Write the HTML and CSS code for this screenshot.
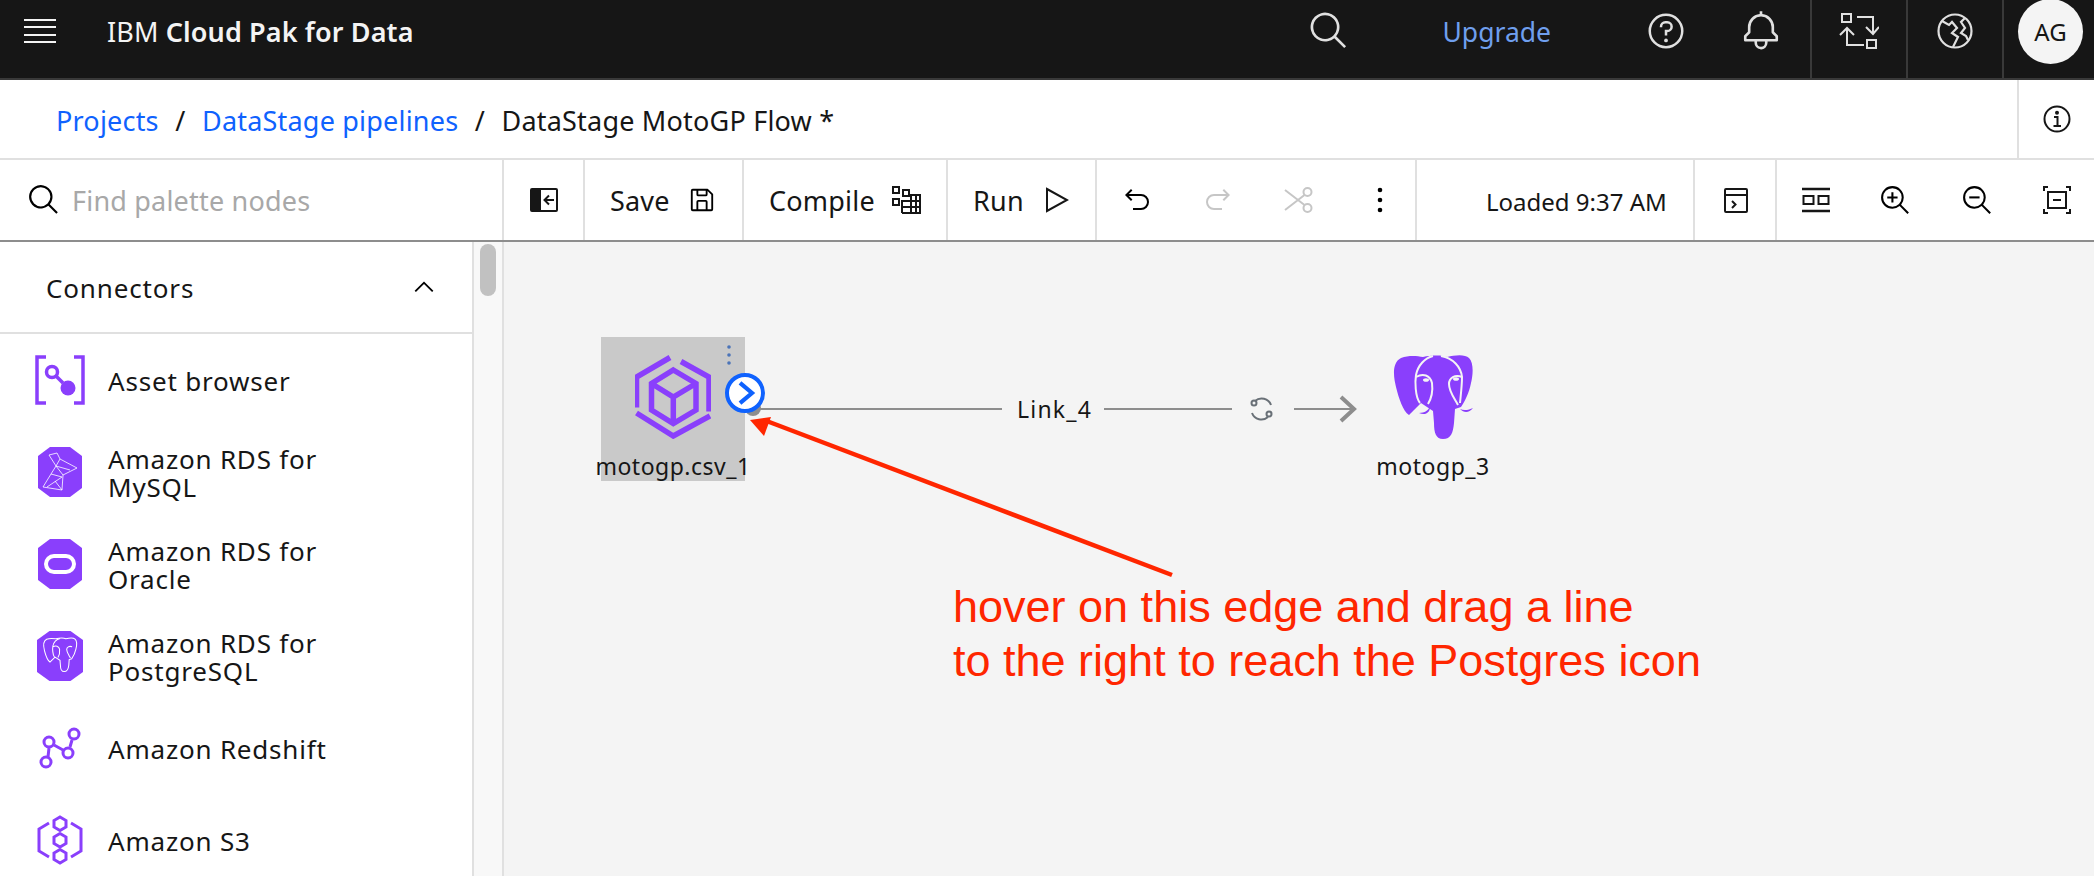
FILE: index.html
```html
<!DOCTYPE html>
<html>
<head>
  <title>DataStage MotoGP Flow - IBM Cloud Pak for Data</title>
  <link rel="stylesheet" href="styles.css">
</head>
<body>

<!-- shared shapes -->
<svg class="sprite" width="0" height="0">
  <symbol id="i-search" viewBox="0 0 32 32"><path d="M29 27.5859l-7.5521-7.5521a11.0177 11.0177 0 1 0-1.4141 1.4141L27.5859 29ZM4 13a9 9 0 1 1 9 9A9.01 9.01 0 0 1 4 13Z"/></symbol>
  <symbol id="i-lens" viewBox="0 0 32 32"><path d="M21.4479,20A10.856,10.856,0,0,0,24,13,11,11,0,1,0,13,24a10.856,10.856,0,0,0,7-2.5521L27.5859,29,29,27.5859ZM13,22a9,9,0,1,1,9-9A9.01,9.01,0,0,1,13,22Z"/></symbol>
  <symbol id="i-octagon" viewBox="0 0 44 50"><path d="M12 0H32L44 9V41L32 50H12L0 41V9Z" fill="#8a3ffc"/></symbol>
  <symbol id="i-elephant-lines" viewBox="0 0 80 84" fill="none">
    <path d="M27 48C22 42 22 26 23 20C25 10 32 3 40 1"/>
    <path d="M23 22C30 18 37 20 39 28C40 36 38 44 35 49"/>
    <path d="M48 1C60 3 68 12 69 22C69 30 68 38 67 48"/>
    <path d="M69 22C62 19 56 23 56 29C56 37 62 44 65 50"/>
  </symbol>
</svg>

<header class="topbar">
  <svg class="hamburger" width="32" height="24" viewBox="0 0 32 24"><path d="M0 1H32M0 8H32M0 16H32M0 23H32" stroke="#f4f4f4" stroke-width="2"/></svg>
  <div class="brand">IBM <strong>Cloud Pak for Data</strong></div>
  <div class="topbar-right">
    <svg class="top-icon search-top" width="42" height="42"><use href="#i-search"/></svg>
    <a class="upgrade">Upgrade</a>
    <svg class="top-icon help-top" width="40" height="40" viewBox="0 0 32 32">
      <path d="M16,2A14,14,0,1,0,30,16,14,14,0,0,0,16,2Zm0,26A12,12,0,1,1,28,16,12,12,0,0,1,16,28Z"/>
      <circle cx="16" cy="23.5" r="1.5"/>
      <path d="M17,8H15.5A4.49,4.49,0,0,0,11,12.5V13h2v-.5A2.5,2.5,0,0,1,15.5,10H17a2.5,2.5,0,0,1,0,5H15v4.5h2V17a4.5,4.5,0,0,0,0-9Z"/>
    </svg>
    <svg class="top-icon bell-top" width="42" height="42" viewBox="0 0 32 32"><path d="M28.7071,19.293,26,16.5859V13a10.0136,10.0136,0,0,0-9-9.9492V1H15V3.0508A10.0136,10.0136,0,0,0,6,13v3.5859L3.2929,19.293A1,1,0,0,0,3,20v3a1,1,0,0,0,1,1h7v.7768a5.152,5.152,0,0,0,4.5,5.1987A5.0057,5.0057,0,0,0,21,25V24h7a1,1,0,0,0,1-1V20A1,1,0,0,0,28.7071,19.293ZM19,25a3,3,0,0,1-6,0V24h6Zm8-3H5V20.4141L7.707,17.707A1,1,0,0,0,8,17V13a8,8,0,0,1,16,0v4a1,1,0,0,0,.293.707L27,20.4141Z"/></svg>
    <div class="top-box">
      <svg width="40" height="36" viewBox="0 0 40 36" fill="none" stroke="#e0e0e0" stroke-width="2">
        <rect x="3" y="1" width="9" height="8"/>
        <path d="M18 4H34V20M27 14L34 21L40 14"/>
        <rect x="28" y="27" width="9" height="8"/>
        <path d="M25 32H8V16M1 22L8 15L15 22"/>
      </svg>
    </div>
    <div class="top-box">
      <svg width="36" height="36" viewBox="0 0 36 36" fill="none" stroke="#e0e0e0" stroke-width="2.2">
        <circle cx="18" cy="18" r="16.500"/>
        <path d="M5 8L12 12L15 9L20 15L15 20L21 24L16 34"/>
        <path d="M28 5L24 9L28 15L24 20L29 23L31 27"/>
      </svg>
    </div>
    <div class="top-box avatar-box"><div class="avatar">AG</div></div>
  </div>
</header>

<nav class="crumbs">
  <a>Projects</a><span class="sep">/</span><a>DataStage pipelines</a><span class="sep">/</span><span>DataStage MotoGP Flow *</span>
  <div class="crumbs-info">
    <svg width="28" height="28" viewBox="0 0 28 28" fill="none" stroke="#161616" stroke-width="2"><circle cx="14" cy="14" r="12.500"/><path d="M11 12H14.500V21M10.500 21H18"/><circle cx="14" cy="7.800" r="1" fill="#161616"/></svg>
  </div>
</nav>

<div class="toolbar">
  <div class="tb-section tb-search">
    <svg class="find-icon" width="34" height="34"><use href="#i-search"/></svg>
    <span class="placeholder">Find palette nodes</span>
  </div>
  <div class="tb-section tb-toggle">
    <svg width="28" height="24" viewBox="0 0 28 24"><rect x="1" y="1" width="26" height="22" rx="1" fill="#fff" stroke="#161616" stroke-width="2"/><rect x="1" y="1" width="10" height="22" fill="#161616"/><path d="M24 12H15M19 7.500L14.500 12L19 16.500" fill="none" stroke="#161616" stroke-width="2"/></svg>
  </div>
  <div class="tb-section tb-save">
    <span>Save</span>
    <svg width="26" height="26" viewBox="2 2 28 28"><path d="M27.71,9.29l-5-5A1,1,0,0,0,22,4H6A2,2,0,0,0,4,6V26a2,2,0,0,0,2,2H26a2,2,0,0,0,2-2V10A1,1,0,0,0,27.71,9.29ZM12,6h8v4H12Zm8,20H12V18h8Zm2,0V18a2,2,0,0,0-2-2H12a2,2,0,0,0-2,2v8H6V6h4v4a2,2,0,0,0,2,2h8a2,2,0,0,0,2-2V6.41l4,4V26Z"/></svg>
  </div>
  <div class="tb-section tb-compile">
    <span>Compile</span>
    <svg width="29" height="28" viewBox="0 0 29 28" fill="none" stroke="#161616" stroke-width="2">
      <rect x="1" y="1" width="6" height="6"/><rect x="11" y="4" width="6" height="6"/><rect x="1" y="13" width="6" height="6"/>
      <path d="M10 27V15H28M19 27V9H28V27H10M10 21H28M24 9V27"/>
    </svg>
  </div>
  <div class="tb-section tb-run">
    <span>Run</span>
    <svg width="24" height="26" viewBox="0 0 24 26"><path d="M2 2L22 13L2 24Z" fill="none" stroke="#161616" stroke-width="2"/></svg>
  </div>
  <div class="tb-section tb-edit">
    <svg width="32" height="32" viewBox="0 0 32 32"><path d="M20,10H7.8149l3.5874-3.5859L10,5,4,11,10,17l1.4023-1.4146L7.8179,12H20a6,6,0,0,1,0,12H12v2h8a8,8,0,0,0,0-16Z"/></svg>
    <svg class="off redo" width="32" height="32" viewBox="0 0 32 32"><path d="M20,10H7.8149l3.5874-3.5859L10,5,4,11,10,17l1.4023-1.4146L7.8179,12H20a6,6,0,0,1,0,12H12v2h8a8,8,0,0,0,0-16Z"/></svg>
    <svg width="32" height="32" viewBox="-1 -1 32 32" fill="none" stroke="#c6c6c6" stroke-width="2"><circle cx="23.500" cy="7" r="4"/><circle cx="23.500" cy="23" r="4"/><path d="M1 5L20.500 20M1 25L20.500 10"/></svg>
    <svg width="32" height="32" viewBox="-1 -1 32 32"><circle cx="15" cy="5" r="2.300"/><circle cx="15" cy="15" r="2.300"/><circle cx="15" cy="25" r="2.300"/></svg>
  </div>
  <div class="tb-section tb-loaded"><span>Loaded 9:37 AM</span></div>
  <div class="tb-section tb-terminal">
    <svg width="24" height="25" viewBox="0 0 24 25" fill="none" stroke="#161616" stroke-width="2"><rect x="1" y="1" width="22" height="23" rx="1"/><path d="M1 7H23M8 13L11.500 16.500L8 20"/></svg>
  </div>
  <div class="tb-view">
    <svg width="28" height="26" viewBox="0 0 28 26" fill="none" stroke="#161616" stroke-width="2"><path d="M0 2H28M0 24H28" stroke-width="2.500"/><rect x="1.500" y="9" width="10" height="8"/><rect x="16.500" y="9" width="10" height="8"/></svg>
    <svg width="33" height="33" viewBox="0 0 32 32"><path d="M18 12L14 12 14 8 12 8 12 12 8 12 8 14 12 14 12 18 14 18 14 14 18 14 18 12z"/><use href="#i-lens"/></svg>
    <svg width="33" height="33" viewBox="0 0 32 32"><rect x="8" y="12" width="10" height="2"/><use href="#i-lens"/></svg>
    <svg width="28" height="28" viewBox="0 0 28 28" fill="none" stroke="#161616" stroke-width="2"><path d="M1 5V1H5M23 1H27V5M1 23V27H5M23 27H27V23"/><rect x="5" y="6" width="18" height="16"/><path d="M10 14H18"/></svg>
  </div>
</div>

<div class="main">
  <aside class="palette">
    <div class="palette-list">
      <div class="palette-head">
        <span>Connectors</span>
        <svg width="30" height="30" viewBox="0 0 32 32"><path d="M16 10L26 20 24.600 21.400 16 12.800 7.400 21.400 6 20z"/></svg>
      </div>
      <div class="node-row asset">
        <svg class="node-icon" width="50" height="50" viewBox="0 0 50 50" fill="none" stroke="#8a3ffc" stroke-width="3.500">
          <path d="M11 2H2V48H11M39 2H48V48H39"/>
          <circle cx="17" cy="17" r="5.500"/>
          <path d="M21 21L28 28"/>
          <circle cx="33" cy="33" r="7.500" fill="#8a3ffc" stroke="none"/>
        </svg>
        <span>Asset browser</span>
      </div>
      <div class="node-row mysql">
        <svg class="node-icon" width="44" height="50" viewBox="0 0 44 50">
          <use href="#i-octagon"/>
          <path d="M11 8L19 6L22 12L39 21L25 28L24 43L5 40L13 27L18 19ZM22 12L18 19L25 28M13 27L24 30L9 40M18 19L32 23M17 34L24 43" fill="none" stroke="#fff" stroke-width=".8"/>
        </svg>
        <span>Amazon RDS for<br>MySQL</span>
      </div>
      <div class="node-row oracle">
        <svg class="node-icon" width="44" height="50" viewBox="0 0 44 50">
          <use href="#i-octagon"/>
          <rect x="8" y="17" width="28" height="16" rx="8" fill="none" stroke="#fff" stroke-width="4"/>
        </svg>
        <span>Amazon RDS for<br>Oracle</span>
      </div>
      <div class="node-row postgres">
        <svg class="node-icon" width="46" height="50" viewBox="0 0 44 50" preserveAspectRatio="none">
          <use href="#i-octagon"/>
          <g transform="translate(6 7) scale(.4)" fill="none" stroke="#fff" stroke-width="2.500">
            <path d="M8 3C16 0 24 1 30 2C38 0 50 0 54 2C62 0 72 -1 76 3C81 8 80 20 78 28C76 38 72 46 68 52L62 54L61 68C60 78 58 84 50 84C43 84 41 78 41 68L40 56L28 48L16 60C10 56 6 44 3 32C1 24 -2 8 8 3Z"/>
            <path d="M27 48C22 42 22 26 23 20C25 10 32 3 40 1M23 22C30 18 37 20 39 28C40 36 38 44 35 49M69 22C62 19 56 23 56 29C56 37 62 44 65 50"/>
          </g>
        </svg>
        <span>Amazon RDS for<br>PostgreSQL</span>
      </div>
      <div class="node-row redshift">
        <svg class="node-icon" width="42" height="42" viewBox="0 0 42 42" fill="none" stroke="#8a3ffc" stroke-width="3">
          <path d="M9 30L10 21M15 18L24 23M31 20L33 13"/>
          <circle cx="7" cy="35" r="5"/><circle cx="10" cy="15" r="5"/><circle cx="29" cy="26" r="5"/><circle cx="35" cy="7" r="5"/>
        </svg>
        <span>Amazon Redshift</span>
      </div>
      <div class="node-row s3">
        <svg class="node-icon" width="46" height="50" viewBox="0 0 46 50" fill="none" stroke="#8a3ffc" stroke-width="3">
          <path d="M12 8L2 14V36L12 42M34 8L44 14V36L34 42"/>
          <path d="M23 2L29 5.500V12L23 15.500L17 12V5.500ZM23 18.500L29 22V28.500L23 32L17 28.500V22ZM23 34.500L29 38V44.500L23 48L17 44.500V38Z"/>
        </svg>
        <span>Amazon S3</span>
      </div>
    </div>
    <div class="palette-scroll"><div class="scroll-thumb"></div></div>
  </aside>

  <section class="canvas">
    <!-- the viewBox keeps the flow drawing in screen coordinates -->
    <svg class="flow-lines" viewBox="504 242 1590 634" width="1590" height="634">
      <path d="M760 409H1002M1104 409H1232M1294 409H1353" fill="none" stroke="#8d8d8d" stroke-width="2"/>
      <path d="M1341 397L1354 409L1341 421" fill="none" stroke="#8d8d8d" stroke-width="4"/>
      <g fill="none" stroke="#697077" stroke-width="2">
        <path d="M1255 401A10 10 0 0 1 1271 405M1268 417A10 10 0 0 1 1252 413"/>
        <circle cx="1254" cy="403" r="2.500"/>
        <circle cx="1269" cy="414" r="2.500"/>
      </g>
    </svg>

    <div class="flow-node csv-node">
      <svg class="kebab" width="6" height="22" viewBox="0 0 6 22" fill="#4b74b8"><circle cx="3" cy="3" r="1.800"/><circle cx="3" cy="11" r="1.800"/><circle cx="3" cy="19" r="1.800"/></svg>
      <svg class="cube" width="76" height="84" viewBox="0 0 76 84" fill="none" stroke="#8a3ffc" stroke-width="5.500">
        <path d="M35 2.500L1.500 22V52.500M1.500 58L38.300 81L75 61M74 56.500V22L46 6.500"/>
        <path d="M38.300 15L61 28.500V55L38.300 68.500L16.500 55V28.500ZM16.500 28.500L38.300 42L61 28.500M38.300 42V68.500"/>
      </svg>
      <div class="flow-label">motogp.csv_1</div>
    </div>

    <div class="port-shadow"></div>
    <div class="port">
      <svg width="24" height="24" viewBox="0 0 20 20"><path d="M5 1.500L15 10L5 18.500" fill="none" stroke="#0f62fe" stroke-width="3.500"/></svg>
    </div>

    <div class="link-label">Link_4</div>

    <div class="flow-node pg-node">
      <svg width="80" height="84" viewBox="0 0 80 84">
        <path d="M8 3C16 0 24 1 30 2C38 0 50 0 54 2C62 0 72 -1 76 3C81 8 80 20 78 28C76 38 72 46 68 52L62 54L61 68C60 78 58 84 50 84C43 84 41 78 41 68L40 56L28 48L16 60C10 56 6 44 3 32C1 24 -2 8 8 3Z" fill="#8a3ffc"/>
        <use href="#i-elephant-lines" stroke="#f4f4f4" stroke-width="2"/>
        <ellipse cx="33" cy="25" rx="3" ry="1.800" fill="#f4f4f4"/>
        <ellipse cx="63" cy="24" rx="3" ry="1.800" fill="#f4f4f4"/>
        <path d="M26 58C32 58 35 55 37 52C37 57 33 61 26 58ZM67 54C71 56 76 55 80 53C76 58 71 58 67 54Z" fill="#8a3ffc"/>
      </svg>
      <div class="flow-label">motogp_3</div>
    </div>

    <svg class="red-arrow" width="440" height="170" viewBox="0 0 440 170">
      <path d="M14 10L422 165" stroke="#ff2600" stroke-width="4.500" fill="none"/>
      <path d="M0 10L21 7L14 26Z" fill="#ff2600"/>
    </svg>
    <div class="note">hover on this edge and drag a line<br>to the right to reach the Postgres icon</div>
  </section>
</div>

</body>
</html>
```

FILE: styles.css
```css
* {
  box-sizing: border-box;
}

html, body {
  height: 100%;
}

body {
  margin: 0;
  overflow: hidden;
  font-family: "Noto Sans", Arial, sans-serif;
  color: #161616;
  background-color: #fff;
}

svg {
  display: block;
  flex: none;
}

.sprite {
  position: absolute;
}

/* top bar */
.topbar {
  display: flex;
  height: 80px;
  padding-left: 24px;
  align-items: center;
  background-color: #161616;
  border-bottom: 2px solid #393939;
  color: #f4f4f4;
}

.hamburger {
  margin-top: -17px;
}

.brand {
  margin: -16px 0 0 51px;
  font-size: 27px;
  letter-spacing: .12px;
}

.brand strong {
  font-weight: 600;
}

.topbar-right {
  display: flex;
  height: 100%;
  margin-left: auto;
  align-items: center;
}

.top-icon {
  fill: #e0e0e0;
  margin-top: -16px;
}

.search-top {
  margin-right: 93px;
}

.upgrade {
  margin: -14px 95px 0 0;
  font-size: 26.5px;
  color: #6f9fee;
}

.help-top {
  margin-right: 54px;
}

.bell-top {
  margin-right: 28px;
}

.top-box {
  display: flex;
  width: 96px;
  height: 100%;
  padding-bottom: 16px;
  align-items: center;
  justify-content: center;
  border-left: 2px solid #393939;
}

.avatar-box {
  width: 92px;
  padding: 0 0 0 14px;
  align-items: flex-start;
  justify-content: flex-start;
}

.avatar {
  display: flex;
  width: 65px;
  height: 65px;
  margin-top: -1px;
  align-items: center;
  justify-content: center;
  border-radius: 50%;
  background-color: #f4f4f4;
  color: #161616;
  font-size: 24px;
}

/* breadcrumb */
.crumbs {
  display: flex;
  height: 80px;
  padding-left: 56px;
  align-items: center;
  border-bottom: 2px solid #e0e0e0;
  font-size: 27px;
  letter-spacing: .2px;
}

.crumbs a,
.crumbs > span {
  margin-top: 2px;
}

.crumbs a {
  color: #0f62fe;
}

.crumbs .sep {
  margin: 2px 16.5px 0;
}

.crumbs-info {
  display: flex;
  width: 77px;
  height: 100%;
  margin-left: auto;
  align-items: center;
  justify-content: center;
  border-left: 2px solid #e0e0e0;
}

/* toolbar */
.toolbar {
  display: flex;
  height: 82px;
  border-bottom: 2px solid #8d8d8d;
  font-size: 27px;
  letter-spacing: .2px;
}

.tb-section {
  display: flex;
  height: 100%;
  align-items: center;
  border-right: 2px solid #e0e0e0;
}

.tb-search {
  width: 504px;
  padding-left: 27px;
}

.find-icon {
  margin-right: 11px;
}

.placeholder {
  color: #a8a8a8;
}

.tb-toggle {
  width: 81px;
  padding-left: 26px;
}

.tb-save {
  width: 159px;
  padding-left: 25px;
  gap: 19px;
}

.tb-compile {
  width: 204px;
  padding-left: 25px;
  gap: 17px;
}

.tb-run {
  width: 149px;
  padding-left: 25px;
  gap: 21px;
}

.tb-edit {
  width: 320px;
  padding-left: 24px;
  gap: 49px;
}

.off {
  fill: #c6c6c6;
}

.redo {
  transform: scaleX(-1);
}

.tb-loaded {
  width: 278px;
  padding-left: 69px;
  font-size: 24px;
  letter-spacing: 0;
}

.tb-loaded span {
  margin-top: 3px;
}

.tb-terminal {
  width: 82px;
  padding-left: 29px;
}

.tb-view {
  display: flex;
  flex: 1;
  padding-left: 25px;
  gap: 49px;
  align-items: center;
}

/* palette */
.main {
  display: flex;
  height: 634px;
}

.palette {
  display: flex;
  width: 504px;
  flex: none;
  border-right: 2px solid #e0e0e0;
}

.palette-list {
  width: 474px;
  height: 100%;
  overflow: hidden;
  border-right: 2px solid #e0e0e0;
}

.palette-scroll {
  flex: 1;
  padding: 2px 0 0 6px;
  background-color: #f8f8f8;
}

.scroll-thumb {
  width: 16px;
  height: 52px;
  border-radius: 8px;
  background-color: #c1c1c1;
}

.palette-head {
  display: flex;
  height: 92px;
  padding: 0 33px 0 46px;
  align-items: center;
  justify-content: space-between;
  border-bottom: 2px solid #e0e0e0;
  font-size: 26px;
  letter-spacing: .85px;
}

.palette-head span {
  margin-top: 1px;
}

.node-row {
  display: flex;
  height: 92px;
  align-items: center;
  font-size: 26px;
  letter-spacing: .8px;
  line-height: 28px;
}

.node-row span {
  margin: 2px 0 0 -1px;
}

.node-icon {
  margin: 0 27px 0 38px;
}

.asset .node-icon {
  margin: 0 24px 0 35px;
}

.postgres .node-icon,
.s3 .node-icon {
  margin: 0 26px 0 37px;
}

.redshift .node-icon {
  margin: 0 28px 0 39px;
}

/* canvas */
.canvas {
  position: relative;
  flex: 1;
  overflow: hidden;
  background-color: #f4f4f4;
}

.flow-lines {
  position: absolute;
  left: 0;
  top: 0;
}

.flow-node {
  position: absolute;
  display: flex;
  flex-direction: column;
  align-items: center;
}

.csv-node {
  left: 97px;
  top: 95px;
  width: 144px;
  height: 144px;
  padding-top: 18px;
  background-color: #c9c9c9;
}

.pg-node {
  left: 874px;
  top: 113px;
  width: 110px;
}

.flow-label {
  margin-top: 13px;
  font-size: 23px;
  letter-spacing: .5px;
  line-height: 28px;
  white-space: nowrap;
}

.kebab {
  position: absolute;
  right: 13px;
  top: 7px;
}

.port {
  position: absolute;
  left: 221px;
  top: 131px;
  display: flex;
  width: 40px;
  height: 40px;
  padding-left: 2px;
  align-items: center;
  justify-content: center;
  border: 4px solid #0f62fe;
  border-radius: 50%;
  background-color: #fff;
}

.port-shadow {
  position: absolute;
  left: 241px;
  top: 158px;
  width: 16px;
  height: 16px;
  border-radius: 50%;
  background-color: #8d8d8d;
}

.link-label {
  position: absolute;
  left: 513px;
  top: 153px;
  font-size: 23px;
  letter-spacing: 1.2px;
  line-height: 28px;
}

.red-arrow {
  position: absolute;
  left: 246px;
  top: 168px;
}

.note {
  position: absolute;
  left: 449px;
  top: 338px;
  font-family: "Liberation Sans", Arial, sans-serif;
  font-size: 45px;
  line-height: 54px;
  color: #ff2600;
  white-space: nowrap;
}
```
